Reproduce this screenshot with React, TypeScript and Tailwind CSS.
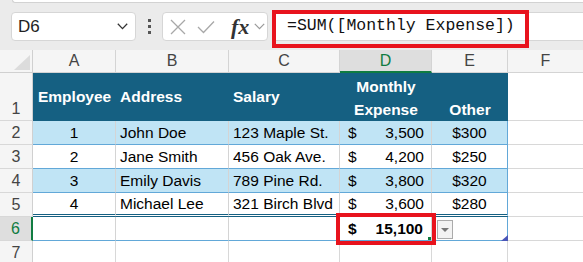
import React from "react";

const F = { fontFamily: '"Liberation Sans", Arial, sans-serif' };

const BLUE_LINE = "border-b-[#62a8d8]";

function RowHead({ n, sel, h, alignEnd }: { n: number; sel?: boolean; h: string; alignEnd?: boolean }) {
  return (
    <div
      className={`w-[33px] shrink-0 ${h} flex justify-center ${alignEnd ? "items-end leading-[22px]" : "items-center pt-[1px]"} border-b border-b-[#d8d8d8] ${
        sel ? "bg-[#dedede] text-[#107c41] border-r-2 border-r-[#107c41]" : "bg-[#f5f5f5] text-[#444] border-r border-r-[#d0d0d0]"
      } text-[16px]`}
    >
      {n}
    </div>
  );
}

type DataRow = { emp: string; name: string; addr: string; amt: string; other: string; band: boolean };

const rows: DataRow[] = [
  { emp: "1", name: "John Doe", addr: "123 Maple St.", amt: "3,500", other: "$300", band: true },
  { emp: "2", name: "Jane Smith", addr: "456 Oak Ave.", amt: "4,200", other: "$250", band: false },
  { emp: "3", name: "Emily Davis", addr: "789 Pine Rd.", amt: "3,800", other: "$320", band: true },
  { emp: "4", name: "Michael Lee", addr: "321 Birch Blvd", amt: "3,600", other: "$280", band: false },
];

export default function App() {
  return (
    <div className="relative w-[583px] h-[262px] overflow-hidden bg-white text-black" style={F}>
      {/* toolbar */}
      <div className="h-[50px] bg-[#ebebeb] flex flex-col">
        <div className="h-[3px] ml-[12px] bg-white border-b border-l border-[#d2d2d2] rounded-bl-[4px]" />
        <div className="flex items-start mt-[9px]">
          <div className="ml-[11px] w-[125px] h-[29px] bg-white border border-[#d6d6d6] rounded-[4px] flex items-center justify-between pl-[6px] pr-[7px]">
            <span className="text-[17px] text-[#222]">D6</span>
            <svg width="11" height="7" viewBox="0 0 11 7">
              <path d="M0.8 0.8 L5.5 5.6 L10.2 0.8" fill="none" stroke="#333" strokeWidth="1.3" />
            </svg>
          </div>
          <div className="w-[26px] h-[29px] flex flex-col items-center justify-center gap-[3px]">
            <div className="w-[3px] h-[3px] bg-[#555]" />
            <div className="w-[3px] h-[3px] bg-[#555]" />
            <div className="w-[3px] h-[3px] bg-[#555]" />
          </div>
          <div className="w-[106px] h-[29px] bg-white border border-[#d6d6d6] rounded-[4px] flex items-center pl-[7px]">
            <svg width="16" height="16" viewBox="0 0 16 16">
              <path d="M1 1 L15 15 M15 1 L1 15" stroke="#a8a8a8" strokeWidth="1.3" fill="none" />
            </svg>
            <svg width="18" height="14" viewBox="0 0 18 14" className="ml-[11px]">
              <path d="M1 7 L6.5 12.5 L17 1.5" stroke="#a8a8a8" strokeWidth="1.3" fill="none" />
            </svg>
            <span
              className="ml-[16px] text-[22px] italic font-semibold text-[#333] leading-none"
              style={{ fontFamily: '"Liberation Serif", "Times New Roman", serif' }}
            >
              fx
            </span>
            <svg width="11" height="7" viewBox="0 0 11 7" className="ml-[5px]">
              <path d="M0.8 0.8 L5.5 5.6 L10.2 0.8" fill="none" stroke="#999" strokeWidth="1.2" />
            </svg>
          </div>
          <div className="relative ml-[4px] flex-1 h-[29px] bg-white border-y border-[#d6d6d6]">
            <div className="absolute left-0 top-[-3px] w-[257px] h-[38px] border-4 border-[#e8131d]" />
            <div
              className="absolute left-[15px] top-0 h-full flex items-center text-[16.5px] text-[#111]"
              style={{ fontFamily: '"Liberation Mono", "Courier New", monospace' }}
            >
              =SUM([Monthly Expense])
            </div>
          </div>
        </div>
      </div>

      {/* column headers */}
      <div className="flex h-[23px] text-[16px] text-[#444]">
        <div className="w-[33px] shrink-0 bg-[#f5f5f5] border-r border-b border-[#d0d0d0] relative">
          <svg width="16" height="15" viewBox="0 0 16 15" className="absolute left-[14px] top-[5px]">
            <path d="M16 0 L16 15 L0 15 Z" fill="#dcdcdc" />
          </svg>
        </div>
        <div className="w-[83px] shrink-0 bg-[#f5f5f5] border-r border-b border-[#d4d4d4] flex items-center justify-center">A</div>
        <div className="w-[113px] shrink-0 bg-[#f5f5f5] border-r border-b border-[#d4d4d4] flex items-center justify-center">B</div>
        <div className="w-[111px] shrink-0 bg-[#f5f5f5] border-r border-b border-[#d4d4d4] flex items-center justify-center">C</div>
        <div className="w-[92px] shrink-0 bg-[#dedede] border-r border-r-[#d4d4d4] border-b-2 border-b-[#107c41] flex items-center justify-center text-[#107c41]">D</div>
        <div className="w-[76px] shrink-0 bg-[#f5f5f5] border-r border-b border-[#d4d4d4] flex items-center justify-center">E</div>
        <div className="w-[75px] shrink-0 bg-[#f5f5f5] border-b border-[#d4d4d4] flex items-center justify-center">F</div>
      </div>

      {/* row 1 : table header */}
      <div className="flex h-[48px] text-[15.5px]">
        <RowHead n={1} h="h-[48px]" alignEnd />
        <div className="w-[83px] shrink-0 bg-[#156082] flex items-center pl-[5px] font-bold text-white">Employee</div>
        <div className="w-[113px] shrink-0 bg-[#156082] flex items-center pl-[4px] font-bold text-white">Address</div>
        <div className="w-[111px] shrink-0 bg-[#156082] flex items-center pl-[4px] font-bold text-white">Salary</div>
        <div className="w-[92px] shrink-0 bg-[#156082] flex flex-col items-center justify-end font-bold text-white leading-[23px]">
          <span>Monthly</span>
          <span>Expense</span>
        </div>
        <div className="w-[76px] shrink-0 bg-[#156082] flex items-end justify-center font-bold text-white leading-[22px]">Other</div>
        <div className="w-[75px] shrink-0 border-b border-[#d8d8d8]" />
      </div>

      {/* data rows */}
      {rows.map((r, i) => {
        const bg = r.band ? "bg-[#c0e4f5]" : "bg-white";
        const bottom = i === rows.length - 1 ? "border-b-[3px] border-double border-b-[#156082]" : `border-b ${BLUE_LINE}`;
        return (
          <div key={i} className="flex h-[24px] text-[15.5px]">
            <RowHead n={i + 2} h="h-[24px]" />
            <div className={`w-[83px] shrink-0 ${bg} ${bottom} border-r border-r-[#d4d4d4] flex items-center justify-center pt-[1px]`}>{r.emp}</div>
            <div className={`w-[113px] shrink-0 ${bg} ${bottom} border-r border-r-[#d4d4d4] flex items-center pl-[4px] pt-[1px]`}>{r.name}</div>
            <div className={`w-[111px] shrink-0 ${bg} ${bottom} border-r border-r-[#d4d4d4] flex items-center pl-[4px] pt-[1px]`}>{r.addr}</div>
            <div className={`w-[92px] shrink-0 ${bg} ${bottom} border-r border-r-[#d4d4d4] flex items-center justify-between pl-[8px] pr-[7px] pt-[1px]`}>
              <span>$</span>
              <span>{r.amt}</span>
            </div>
            <div className={`w-[76px] shrink-0 ${bg} ${bottom} border-r border-r-[#62a8d8] flex items-center justify-center pt-[1px]`}>{r.other}</div>
            <div className="w-[75px] shrink-0 border-b border-[#d8d8d8]" />
          </div>
        );
      })}

      {/* row 6 : totals */}
      <div className="flex h-[24px] text-[15.5px]">
        <RowHead n={6} h="h-[24px]" sel />
        <div className={`w-[83px] shrink-0 border-b ${BLUE_LINE} border-r border-r-[#d4d4d4]`} />
        <div className={`w-[113px] shrink-0 border-b ${BLUE_LINE} border-r border-r-[#d4d4d4]`} />
        <div className={`w-[111px] shrink-0 border-b ${BLUE_LINE} border-r border-r-[#d4d4d4]`} />
        <div className={`w-[92px] shrink-0 border-b ${BLUE_LINE} border-r border-r-[#d4d4d4] flex items-center justify-between pl-[8px] pr-[8px] pt-[1px] font-bold`}>
          <span>$</span>
          <span>15,100</span>
        </div>
        <div className={`w-[76px] shrink-0 border-b ${BLUE_LINE} border-r border-r-[#62a8d8]`} />
        <div className="w-[75px] shrink-0 border-b border-[#d8d8d8]" />
      </div>

      {/* row 7 */}
      <div className="flex h-[24px] text-[15px]">
        <RowHead n={7} h="h-[24px]" />
        <div className="w-[83px] shrink-0 border-r border-b border-[#d8d8d8]" />
        <div className="w-[113px] shrink-0 border-r border-b border-[#d8d8d8]" />
        <div className="w-[111px] shrink-0 border-r border-b border-[#d8d8d8]" />
        <div className="w-[92px] shrink-0 border-r border-b border-[#d8d8d8]" />
        <div className="w-[76px] shrink-0 border-r border-b border-[#d8d8d8]" />
        <div className="w-[75px] shrink-0 border-b border-[#d8d8d8]" />
      </div>

      {/* overlays */}
      <div className="absolute left-[336px] top-[213px] w-[100px] h-[32px] border-4 border-[#e8131d]" />
      <div className="absolute left-[428px] top-[237px] w-[3px] h-[3px] bg-[#107c41]" />
      <div className="absolute left-[437px] top-[220px] w-[16px] h-[19px] bg-[#f3f3f3] border border-[#ababab] flex items-center justify-center">
        <svg width="8" height="4" viewBox="0 0 8 4">
          <path d="M0 0 L8 0 L4 4 Z" fill="#777" />
        </svg>
      </div>
      <svg width="7" height="6" viewBox="0 0 7 6" className="absolute left-[501px] top-[235px]">
        <path d="M7 0 L7 6 L0 6 Z" fill="#4a56b8" />
      </svg>
    </div>
  );
}
